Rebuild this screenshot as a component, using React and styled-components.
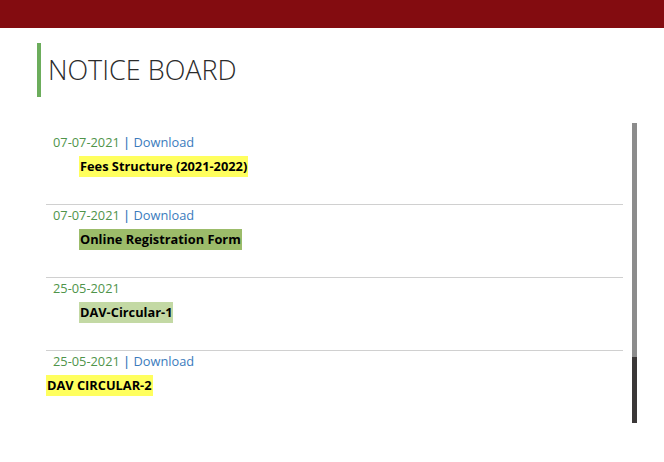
import React from "react";
import styled, { createGlobalStyle } from "styled-components";

const Global = createGlobalStyle`
  html, body { margin: 0; padding: 0; background: #fff; }
  body { font-family: "Open Sans", "Noto Sans", sans-serif; }
`;

const TopBar = styled.header`
  height: 28px;
  background: #830c10;
`;

const Heading = styled.h2`
  margin: 15px 0 0 37px;
  height: 54px;
  border-left: 4px solid #6cad5c;
  padding: 0 0 2px 7px;
  display: flex;
  align-items: center;
  font-family: "Open Sans", sans-serif;
  font-weight: 300;
  font-size: 27px;
  color: #2b2b2b;
  box-sizing: border-box;
`;

const Board = styled.section`
  display: flex;
  margin: 26px 0 0 46px;
  gap: 9px;
  width: 591px;
`;

const List = styled.ul`
  list-style: none;
  margin: 0;
  padding: 8px 0 0;
  flex: 1;
`;

const Item = styled.li`
  border-top: 1px solid ${(p) => (p.$first ? "transparent" : "#d0d0d0")};
  padding-bottom: 28px;
  font-size: 12.8px;
`;

const DateLine = styled.div`
  padding-left: 7px;
  line-height: 20px;
  color: #4f944a;
`;

const Sep = styled.span`
  color: #3a7bbd;
  font-weight: 600;
`;

const DownloadLink = styled.a`
  color: #3a7bbd;
  text-decoration: none;
`;

const Title = styled.div`
  margin-top: 4px;
  line-height: 20px;
  padding-left: ${(p) => (p.$indent ? "33px" : "0")};
`;

const Mark = styled.span`
  background: ${(p) => p.$bg};
  color: #000;
  font-weight: 700;
  font-size: 12.8px;
  padding: 1px 1px 2px;
`;

const Track = styled.div`
  width: 5px;
  height: 300px;
  background: #8c8c8c;
  display: flex;
  flex-direction: column;
  justify-content: flex-end;
`;

const Thumb = styled.div`
  height: 66px;
  background: #3b3838;
`;

const notices = [
  { date: "07-07-2021", download: true, title: "Fees Structure (2021-2022)", bg: "#ffff5e", indent: true },
  { date: "07-07-2021", download: true, title: "Online Registration Form", bg: "#9cbc6a", indent: true },
  { date: "25-05-2021", download: false, title: "DAV-Circular-1", bg: "#c3d9a4", indent: true },
  { date: "25-05-2021", download: true, title: "DAV CIRCULAR-2", bg: "#ffff5e", indent: false },
];

export default function App() {
  return (
    <>
      <Global />
      <TopBar />
      <Heading>NOTICE BOARD</Heading>
      <Board>
        <List>
          {notices.map((n, i) => (
            <Item key={i} $first={i === 0}>
              <DateLine>
                {n.date}
                {n.download && (
                  <>
                    {" "}
                    <Sep>|</Sep> <DownloadLink href="#">Download</DownloadLink>
                  </>
                )}
              </DateLine>
              <Title $indent={n.indent}>
                <Mark $bg={n.bg}>{n.title}</Mark>
              </Title>
            </Item>
          ))}
        </List>
        <Track>
          <Thumb />
        </Track>
      </Board>
    </>
  );
}
